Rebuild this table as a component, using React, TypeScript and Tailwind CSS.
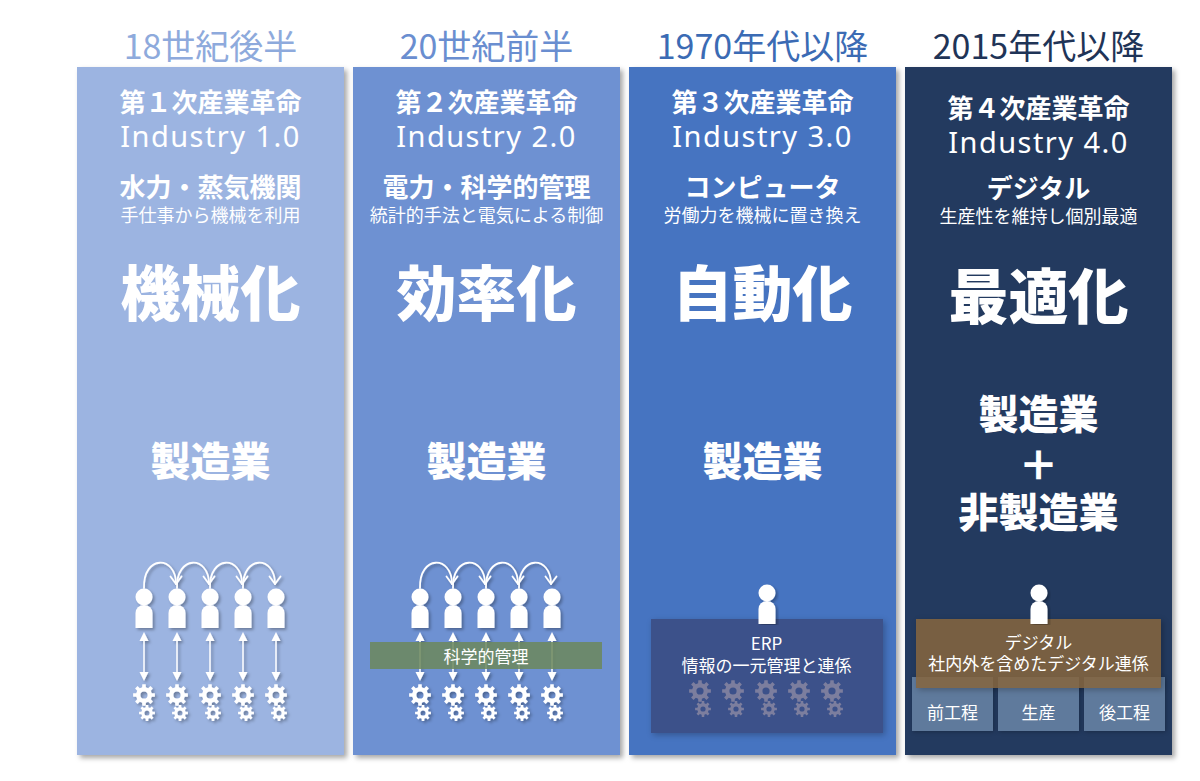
import React from 'react';

type Col = {
  year: string;
  yearCls: string;
  bg: string;
  title: string;
  ind: string;
  tech: string;
  sub: string;
  big: string;
  titleMt: string;
  techMt: string;
  bigMt: string;
};

const cols: Col[] = [
  {
    year: '18世紀後半',
    yearCls: 'text-[#8eaadc]',
    bg: 'bg-[#9cb4e1]',
    title: '第１次産業革命',
    ind: 'Industry 1.0',
    tech: '水力・蒸気機関',
    sub: '手仕事から機械を利用',
    big: '機械化',
    titleMt: 'mt-[19px]',
    techMt: 'mt-[17px]',
    bigMt: 'mt-[30px]',
  },
  {
    year: '20世紀前半',
    yearCls: 'text-[#6a8ed0]',
    bg: 'bg-[#6e91d2]',
    title: '第２次産業革命',
    ind: 'Industry 2.0',
    tech: '電力・科学的管理',
    sub: '統計的手法と電気による制御',
    big: '効率化',
    titleMt: 'mt-[19px]',
    techMt: 'mt-[17px]',
    bigMt: 'mt-[30px]',
  },
  {
    year: '1970年代以降',
    yearCls: 'text-[#3b6bb4]',
    bg: 'bg-[#4674c1]',
    title: '第３次産業革命',
    ind: 'Industry 3.0',
    tech: 'コンピュータ',
    sub: '労働力を機械に置き換え',
    big: '自動化',
    titleMt: 'mt-[19px]',
    techMt: 'mt-[17px]',
    bigMt: 'mt-[30px]',
  },
  {
    year: '2015年代以降',
    yearCls: 'text-[#1f3457]',
    bg: 'bg-[#233a5f]',
    title: '第４次産業革命',
    ind: 'Industry 4.0',
    tech: 'デジタル',
    sub: '生産性を維持し個別最適',
    big: '最適化',
    titleMt: 'mt-[25px]',
    techMt: 'mt-[12px]',
    bigMt: 'mt-[32px]',
  },
];

// gear outline with a round hole in the middle
const gearPath = (cx: number, cy: number, rOut: number, rRoot: number, hole: number, n = 8) => {
  const step = (Math.PI * 2) / n;
  const pts: string[] = [];
  for (let i = 0; i < n; i++) {
    const a = i * step - Math.PI / 2;
    const base = step * 0.3;
    const top = step * 0.2;
    [
      [a - base, rRoot],
      [a - top, rOut],
      [a + top, rOut],
      [a + base, rRoot],
    ].forEach(([ang, r]) => {
      pts.push(`${(cx + Math.cos(ang) * r).toFixed(2)},${(cy + Math.sin(ang) * r).toFixed(2)}`);
    });
  }
  const outer = `M${pts.join('L')}Z`;
  const inner = `M${cx + hole},${cy}A${hole},${hole} 0 1 0 ${cx - hole},${cy}A${hole},${hole} 0 1 0 ${cx + hole},${cy}Z`;
  return outer + inner;
};

const GearPair = ({ x, y, color }: { x: number; y: number; color: string }) => (
  <g fill={color} fillRule="evenodd">
    <path d={gearPath(x, y, 11, 8, 3.6)} />
    <path d={gearPath(x + 3, y + 18, 8, 5.8, 2.6)} />
  </g>
);

const Person = ({ x, y }: { x: number; y: number }) => (
  <g fill="#fff">
    <circle cx={x} cy={y} r={8.5} />
    <path d={`M${x - 8.5} ${y + 31}V${y + 16}A8.5 8 0 0 1 ${x + 8.5} ${y + 16}V${y + 31}Z`} />
  </g>
);

const xs = [67, 100, 133, 166, 199];

const ChainDiagram = ({ id }: { id: string }) => (
  <svg width="267" height="200" viewBox="0 0 267 200" className="block">
    <defs>
      <filter id={id} x="-20%" y="-20%" width="140%" height="140%">
        <feDropShadow dx="2" dy="2" stdDeviation="1.5" floodColor="#000" floodOpacity="0.3" />
      </filter>
    </defs>
    <g filter={`url(#${id})`}>
      {xs.slice(0, 4).map((x, i) => {
        const x2 = xs[i + 1] - 1;
        return (
          <g key={x} fill="none" stroke="#fff" strokeWidth="1.8" strokeLinecap="round" strokeLinejoin="round">
            <path d={`M${x} 33C${x - 1} 0 ${x2} 0 ${x2} 29`} />
            <path d={`M${x2 - 5.5} 21.5L${x2} 29L${x2 + 5.5} 21.5`} />
          </g>
        );
      })}
      {xs.map((x) => (
        <g key={x}>
          <Person x={x} y={42} />
          <line x1={x} y1={82} x2={x} y2={121} stroke="#fff" strokeWidth="1.5" />
          <polygon points={`${x},77 ${x - 4.5},86 ${x + 4.5},86`} fill="#fff" />
          <polygon points={`${x},126 ${x - 4.5},117 ${x + 4.5},117`} fill="#fff" />
          <GearPair x={x} y={140} color="#fff" />
        </g>
      ))}
    </g>
  </svg>
);

const SinglePerson = ({ id }: { id: string }) => (
  <svg width="24" height="45" viewBox="0 0 24 45" className="block relative z-20">
    <defs>
      <filter id={id} x="-30%" y="-20%" width="160%" height="140%">
        <feDropShadow dx="2" dy="2" stdDeviation="1.5" floodColor="#000" floodOpacity="0.3" />
      </filter>
    </defs>
    <g filter={`url(#${id})`}>
      <Person x={12} y={13} />
    </g>
  </svg>
);

const Column = ({ c, children }: { c: Col; children: React.ReactNode }) => (
  <div className="flex flex-col items-center w-[267px]">
    <div className={`text-[34px] leading-[40px] whitespace-nowrap ${c.yearCls}`}>{c.year}</div>
    <div
      className={`mt-[2px] h-[688px] w-full ${c.bg} shadow-[3px_3px_5px_rgba(0,0,0,0.35)] flex flex-col items-center text-white`}
    >
      <div className={`${c.titleMt} text-[26px] leading-[30px] font-bold`}>{c.title}</div>
      <div className="mt-[2px] text-[29px] leading-[36px] tracking-[0.05em] font-['Noto_Sans',sans-serif]">
        {c.ind}
      </div>
      <div className={`${c.techMt} text-[26px] leading-[30px] font-bold`}>{c.tech}</div>
      <div className="mt-[2px] text-[18px] leading-[22px] whitespace-nowrap">{c.sub}</div>
      <div className={`${c.bigMt} text-[60px] leading-[70px] font-black`}>{c.big}</div>
      {children}
    </div>
  </div>
);

export default function App() {
  return (
    <div className="w-[1200px] h-[781px] bg-white overflow-hidden font-['Noto_Sans_CJK_JP','Noto_Sans',sans-serif]">
      <div className="flex gap-[9px] pl-[77px] pt-[25px]">
        <Column c={cols[0]}>
          <div className="mt-[110px] text-[40px] leading-[48px] font-black">製造業</div>
          <div className="mt-[72px]">
            <ChainDiagram id="sh1" />
          </div>
        </Column>

        <Column c={cols[1]}>
          <div className="mt-[110px] text-[40px] leading-[48px] font-black">製造業</div>
          <div className="mt-[72px] relative">
            <ChainDiagram id="sh2" />
            <div className="absolute left-[17px] top-[87px] w-[232px] h-[27px] bg-[rgba(108,136,92,0.86)] flex items-center justify-center text-[17px] leading-[22px] text-white">
              科学的管理
            </div>
          </div>
        </Column>

        <Column c={cols[2]}>
          <div className="mt-[110px] text-[40px] leading-[48px] font-black">製造業</div>
          <div className="mt-[97px] ml-[8px] flex flex-col items-center">
            <SinglePerson id="sh3" />
            <div className="-mt-[6px] w-[232px] h-[114px] bg-[#3c518a] shadow-[2px_2px_6px_rgba(0,0,0,0.25)] flex flex-col items-center pt-[13px]">
              <div className="text-[17px] leading-[22px]">ERP</div>
              <div className="text-[17px] leading-[22px]">情報の一元管理と連係</div>
              <svg width="232" height="48" viewBox="0 0 232 48" className="block">
                {[49, 82, 115, 148, 181].map((x) => (
                  <GearPair key={x} x={x} y={15} color="#7c7e9e" />
                ))}
              </svg>
            </div>
          </div>
        </Column>

        <Column c={cols[3]}>
          <div className="mt-[61px] text-[40px] leading-[46px] font-black">製造業</div>
          <div className="mt-[5px] text-[40px] leading-[46px] font-black">＋</div>
          <div className="mt-[1px] text-[40px] leading-[46px] font-black">非製造業</div>
          <div className="mt-[47px] flex flex-col items-center">
            <SinglePerson id="sh4" />
            <div className="relative z-10 -mt-[6px] w-[245px] h-[69px] bg-[rgba(134,101,62,0.86)] shadow-[2px_2px_6px_rgba(0,0,0,0.25)] flex flex-col items-center pt-[12px]">
              <div className="text-[17px] leading-[21px]">デジタル</div>
              <div className="text-[17px] leading-[21px] whitespace-nowrap">社内外を含めたデジタル連係</div>
            </div>
            <div className="-mt-[11px] flex gap-[5px]">
              {['前工程', '生産', '後工程'].map((t) => (
                <div
                  key={t}
                  className="w-[81px] h-[54px] bg-[rgba(121,149,182,0.7)] shadow-[1px_1px_4px_rgba(0,0,0,0.25)] flex justify-center pt-[24px] text-[17px] leading-[22px]"
                >
                  {t}
                </div>
              ))}
            </div>
          </div>
        </Column>
      </div>
    </div>
  );
}
